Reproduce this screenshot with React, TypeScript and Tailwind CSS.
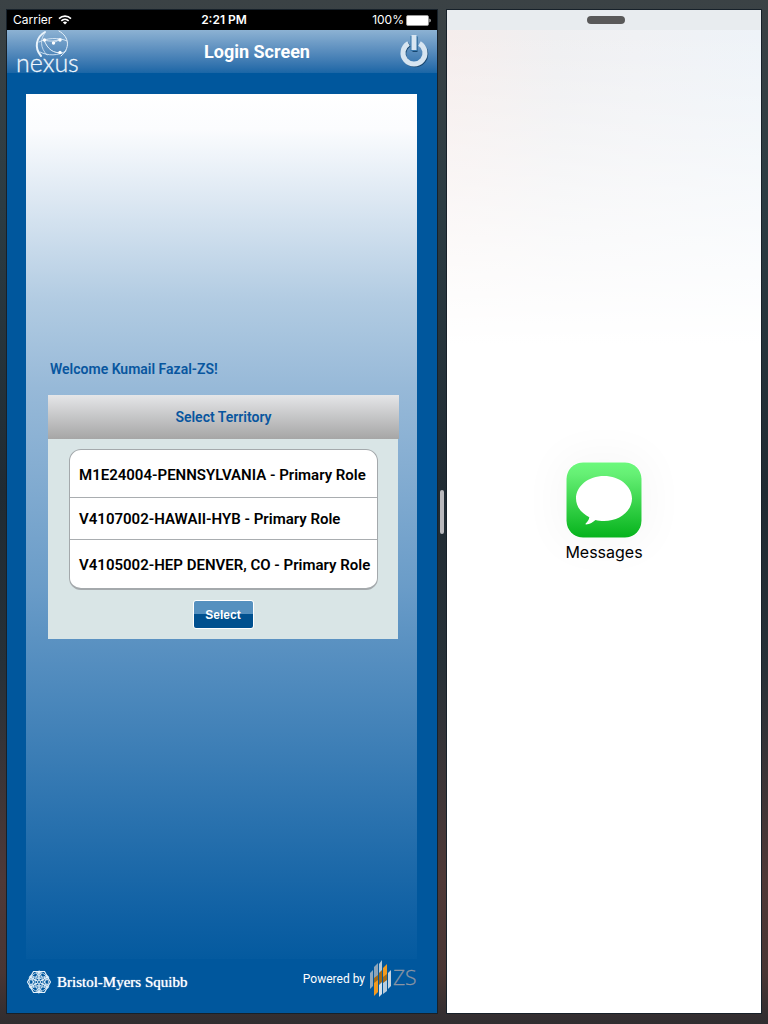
import React from "react";

const territories = [
  { label: "M1E24004-PENNSYLVANIA - Primary Role", row: "h-[47px] pt-1" },
  { label: "V4107002-HAWAII-HYB - Primary Role", row: "h-[41px] pt-0.5" },
  { label: "V4105002-HEP DENVER, CO - Primary Role", row: "h-12 pt-0.5" },
];

function WifiIcon() {
  return (
    <svg width="14" height="10" viewBox="0 0 14 10" fill="none" stroke="#fff" strokeWidth="1.6" aria-hidden="true">
      <path d="M1 3.6C4.4.3 9.6.3 13 3.6" />
      <path d="M3.3 5.9c2.1-2 5.3-2 7.4 0" />
      <path d="M4.9 7.4c1.2-1.1 3-1.1 4.2 0L7 9.6z" fill="#fff" stroke="none" />
    </svg>
  );
}

function BatteryIcon() {
  return (
    <svg width="25" height="11" viewBox="0 0 25 11" aria-hidden="true">
      <rect x=".5" y=".5" width="22" height="10" rx="1.5" fill="#fff" stroke="#999" />
      <rect x="1" y="1.500" width="21" height="8" fill="#fff" />
      <path d="M23.500 3.500c1.500.6 1.500 3.400 0 4z" fill="#fff" />
    </svg>
  );
}

function NexusLogo() {
  return (
    <svg width="76" height="43" viewBox="0 0 76 43" className="overflow-visible" role="img" aria-label="nexus">
      <g fill="none" stroke="#eaf4fc" strokeLinecap="round">
        <path d="M34 2C25 7 23 18 30 26" strokeWidth="2" />
        <path d="M34 3C29 9 29 18 36 25" strokeWidth=".7" />
        <path d="M48 1c11 6 11 18 2 25" strokeWidth="1" />
        <path d="M33 10c4 10 9 13 18 13" strokeWidth="1" />
        <path d="M28 12c7-4 20-5 28-1M33 10c7 2 12 1 16-1M42 13l8-4M29 22c8 4 18 4 26-1" strokeWidth=".8" />
      </g>
      <g fill="#fff">
        <circle cx="33.500" cy="10" r="1.700" />
        <circle cx="42.500" cy="13" r="1.700" />
        <circle cx="49" cy="10" r="1.700" />
        <circle cx="49" cy="22.500" r="1.700" />
      </g>
      <text x="5" y="42" fill="#eef6fd" stroke="#eef6fd" strokeWidth=".3" fontFamily="Lato, sans-serif" fontSize="25" fontWeight="300">nexus</text>
    </svg>
  );
}

function PowerIcon() {
  return (
    <svg width="30" height="34" viewBox="0 0 30 34" fill="none" aria-hidden="true">
      <g stroke="#17466f" transform="translate(1 1)">
        <path d="M9.500 8.500a11 11 0 1 0 11 0" strokeWidth="4.500" />
        <path d="M15 1v15" strokeWidth="5" />
      </g>
      <path d="M9.500 8.500a11 11 0 1 0 11 0" stroke="#d7e5f1" strokeWidth="5" />
      <path d="M15 1v15" stroke="#3776ab" strokeWidth="7" />
      <path d="M15 0v15" stroke="#d7e5f1" strokeWidth="5" />
    </svg>
  );
}

function RosetteIcon() {
  return (
    <svg width="24" height="24" viewBox="-12 -12 24 24" fill="none" stroke="#e4f1fa" strokeWidth=".8" aria-hidden="true">
      <path d="M-5.500-10.500h11L11.500 0l-6 10.500h-11L-11.500 0z" strokeWidth="1.200" />
      <circle r="9.500" />
      <circle r="4" />
      {[0, 60, 120, 180, 240, 300].map((a) => (
        <g key={a} transform={`rotate(${a})`}>
          <path d="M0 0L9 5M0 0v-10M0-10L4-3M0-10L-4-3" />
          <circle cx="7.500" cy="4.300" r="2.200" />
        </g>
      ))}
      <circle r="1.500" fill="#00579d" />
    </svg>
  );
}

function ZsLogo() {
  return (
    <svg width="48" height="38" viewBox="0 0 48 38" className="overflow-visible" role="img" aria-label="ZS">
      <path d="M1 13l3-3v16l-3 3z" fill="#8fa9c0" />
      <path d="M5 7l4-4v19l-4 3z" fill="#8fa5b8" />
      <path d="M5 22l4-3v13l-4 4z" fill="#f39a1f" />
      <path d="M10 4l3-4v17l-3 3z" fill="#b4c8d9" />
      <path d="M10 13l3-3v12l-3 3z" fill="#a56a17" />
      <path d="M10 25l3-3v12l-3 3z" fill="#d6e0e9" />
      <path d="M14 8l4-4v16l-4 3z" fill="#f39a1f" />
      <path d="M14 22l4-3v12l-4 3z" fill="#b9cbdb" />
      <path d="M5 18l4-3v5l-4 3zM14 17l4-3v6l-4 3z" fill="#a56a17" />
      <path d="M19 13l3-3v16l-3 3z" fill="#c4d3e1" />
      <text x="24" y="25" fill="#8b95a3" stroke="#8b95a3" strokeWidth=".3" fontFamily="'Open Sans', sans-serif" fontSize="21" fontWeight="300">ZS</text>
    </svg>
  );
}

function LoginApp() {
  return (
    <main className="flex min-w-0 flex-[430] flex-col bg-[#00579d] outline-1 outline-[#17212a]">
      <div className="grid h-5 grid-cols-3 items-center bg-black px-1.5 font-[Inter,sans-serif] text-xs text-white">
        <span className="flex items-center gap-1.5">Carrier <WifiIcon /></span>
        <span className="pl-1 text-center font-semibold">2:21 PM</span>
        <span className="flex items-center justify-end gap-0.5">100% <BatteryIcon /></span>
      </div>
      <header className="grid h-[43px] grid-cols-[118px_1fr_44px] items-center bg-linear-to-b from-[#8db2d3] to-[#1a66a6] pr-2 pl-1">
        <NexusLogo />
        <h1 className="text-center text-lg font-bold text-white">Login Screen</h1>
        <button type="button" aria-label="Log out" className="justify-self-end"><PowerIcon /></button>
      </header>
      <section className="mt-[21px] mr-5 ml-[19px] flex grow flex-col bg-[linear-gradient(to_bottom,#ffffff_0%,#fbfcfe_4%,#b1cbe2_24%,#97b9d8_34%,#6a9cc8_57%,#5b92c2_63%,#0d5fa3_96%,#045a9f_100%)] px-[22px] pt-[265px]">
        <p className="pl-0.5 text-sm leading-5 font-semibold text-[#08569f]">Welcome Kumail Fazal-ZS!</p>
        <div className="mt-4 -mr-1">
          <h2 className="flex h-11 items-center justify-center bg-linear-to-b from-[#e5e6e8] to-[#a6a6a6] text-sm font-semibold text-[#08569f]">Select Territory</h2>
          <div className="mr-px bg-[#d9e5e6] px-[21px] pt-2.5 pb-2.5">
            <ul className="-mr-px divide-y divide-[#a9adb0] overflow-hidden rounded-xl border border-b-2 border-[#a4a9ac] bg-white">
              {territories.map((t) => (
                <li key={t.label}>
                  <button type="button" className={`flex w-full items-center pl-[9px] text-left text-[15px] font-semibold whitespace-nowrap text-black ${t.row}`}>{t.label}</button>
                </li>
              ))}
            </ul>
            <button type="button" className="mx-auto mt-2.5 block h-[29px] w-[61px] rounded-[3px] border border-white bg-[linear-gradient(to_bottom,#5590bf_50%,#00508f_50%)] font-['Liberation_Sans',sans-serif] text-xs font-bold text-white">Select</button>
          </div>
        </div>
      </section>
      <footer className="flex h-[54px] items-start justify-between px-5 pt-px text-white">
        <div className="flex items-center gap-1.5 pt-2.5 font-['Liberation_Serif',serif] text-[15px] [text-shadow:0_0_1px_#fff]">
          <RosetteIcon />
          <span>Bristol-Myers Squibb</span>
        </div>
        <div className="flex items-center gap-1 text-xs">
          <span>Powered by</span>
          <ZsLogo />
        </div>
      </footer>
    </main>
  );
}

function MessagesPane() {
  return (
    <aside className="flex min-w-0 flex-[314] flex-col bg-white outline-1 outline-[#17212a]">
      <div className="flex h-5 items-center justify-center bg-[#e8ecef] pl-1">
        <span className="h-2 w-[38px] rounded-full bg-[#595959]" />
      </div>
      <div className="flex grow flex-col items-center bg-[linear-gradient(to_bottom,transparent_0%,#ffffff_32%),linear-gradient(to_right,#f5edec,#efeff1_35%,#f0f1f4_60%,#eef3f8)] pt-[432px]">
        <div className="flex flex-col items-center">
          <svg width="76" height="76" viewBox="0 0 76 76" className="rounded-[17px] shadow-[0_0_40px_10px_rgba(0,0,0,0.03)]" aria-hidden="true">
            <defs>
              <linearGradient id="green" x1="0" y1="0" x2="0" y2="1">
                <stop offset="0" stopColor="#6bf97c" />
                <stop offset=".15" stopColor="#66f075" />
                <stop offset="1" stopColor="#06b31c" />
              </linearGradient>
            </defs>
            <rect x=".5" y=".5" width="75" height="75" rx="16.500" fill="url(#green)" />
            <path d="M38 14c15.500 0 28 10 28 22.500S53.500 59 38 59c-3 0-6-.4-8.500-1.100-2.500 2-5.500 4.300-9.500 4.600-.5 0-.7-.6-.3-1 2-2 3.300-4 3.600-6.300C15 51 10 44.300 10 36.500 10 24 22.500 14 38 14z" fill="#fff" />
          </svg>
          <span className="mt-0.5 font-[Inter,sans-serif] text-base leading-6 text-black">Messages</span>
        </div>
      </div>
    </aside>
  );
}

export default function App() {
  return (
    <div className="flex min-h-screen bg-[linear-gradient(to_bottom,#3b4245_0%,#2c3c43_20%,#202b33_48%,#273138_65%,#4f3937_86%,#493634_95%,#302d30_100%)] pt-2.5 pr-[7px] pb-[11px] pl-[7px] font-[Roboto,sans-serif]">
      <LoginApp />
      <div className="flex w-2.5 items-center justify-center">
        <span className="h-11 w-1 rounded-full bg-[#b9b9bd]" />
      </div>
      <MessagesPane />
    </div>
  );
}
